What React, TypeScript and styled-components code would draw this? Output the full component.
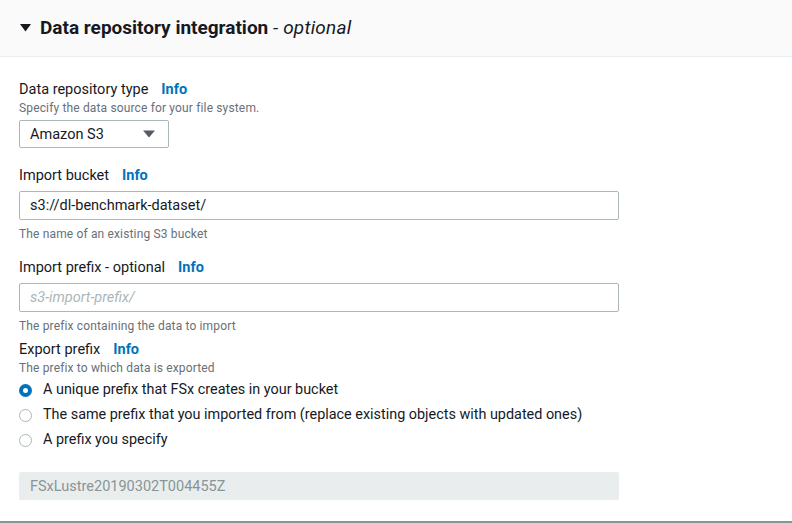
import React from "react";
import styled, { createGlobalStyle } from "styled-components";

const Global = createGlobalStyle`
  html, body { margin: 0; padding: 0; background: #fff; }
  body { font-family: Roboto, "Liberation Sans", sans-serif; color: #16191f; }
  * { box-sizing: border-box; }
`;

const Panel = styled.div`
  width: 792px;
  height: 523px;
  border-bottom: 2px solid #879596;
  overflow: hidden;
  background: #fff;
`;

const Header = styled.div`
  height: 57px;
  background: #fafafa;
  border-bottom: 1px solid #eaeded;
  display: flex;
  align-items: center;
  padding-left: 20px;
  gap: 9px;
  padding-bottom: 1px;
`;

const Title = styled.h2`
  margin: 0;
  font-size: 19px;
  font-weight: 700;
  color: #16191f;
`;

const Optional = styled.span`
  font-weight: 400;
  font-style: italic;
  letter-spacing: 0.2px;
`;

const Body = styled.div`
  padding: 23px 0 0 19px;
  display: flex;
  flex-direction: column;
`;

const Field = styled.div<{ $mt?: number }>`
  display: flex;
  flex-direction: column;
  margin-top: ${(p) => p.$mt ?? 0}px;
`;

const Label = styled.div`
  font-size: 14.5px;
  line-height: 20px;
  color: #16191f;
  display: flex;
  gap: 13px;
`;

const Info = styled.span`
  color: #0073bb;
  font-weight: 700;
`;

const Desc = styled.div`
  font-size: 12px;
  line-height: 16px;
  color: #687078;
  letter-spacing: 0.15px;
`;

const Select = styled.div`
  margin-top: 4px;
  width: 150px;
  height: 28px;
  border: 1px solid #aab7b8;
  border-radius: 2px;
  display: flex;
  align-items: center;
  justify-content: space-between;
  padding: 0 13px 0 10px;
  font-size: 14.5px;
`;

const Input = styled.div<{ $placeholder?: boolean; $disabled?: boolean }>`
  margin-top: ${(p) => (p.$disabled ? 22 : 5)}px;
  width: 600px;
  height: ${(p) => (p.$disabled ? 28 : 29)}px;
  border: 1px solid ${(p) => (p.$disabled ? "#eaeded" : "#aab7b8")};
  background: ${(p) => (p.$disabled ? "#eaeded" : "#fff")};
  border-radius: 2px;
  display: flex;
  align-items: center;
  padding-left: 10px;
  font-size: 14.5px;
  color: ${(p) => (p.$placeholder ? "#aab7b8" : p.$disabled ? "#879596" : "#16191f")};
  font-style: ${(p) => (p.$placeholder ? "italic" : "normal")};
`;

const Help = styled.div`
  margin-top: 6px;
  font-size: 12px;
  line-height: 16px;
  color: #687078;
  letter-spacing: 0.15px;
`;

const Radios = styled.div`
  margin-top: 4px;
  display: flex;
  flex-direction: column;
  gap: 5px;
`;

const RadioRow = styled.div`
  display: flex;
  align-items: center;
  gap: 11px;
  font-size: 14.4px;
  line-height: 20px;
`;

const Circle = styled.span<{ $on?: boolean }>`
  width: 13px;
  height: 13px;
  border-radius: 50%;
  border: ${(p) => (p.$on ? "4px solid #0073bb" : "1px solid #aab7b8")};
  background: #fff;
  flex: none;
`;

const Triangle = () => (
  <svg width="11" height="9" viewBox="0 0 11 9">
    <polygon points="0,1 11,1 5.5,8.5" fill="#16191f" />
  </svg>
);

const Caret = () => (
  <svg width="12" height="8" viewBox="0 0 12 8">
    <polygon points="0,0.5 12,0.5 6,7.5" fill="#545b64" />
  </svg>
);

export default function App() {
  return (
    <>
      <Global />
      <Panel>
        <Header>
          <Triangle />
          <Title>
            Data repository integration <Optional>- optional</Optional>
          </Title>
        </Header>
        <Body>
          <Field>
            <Label>
              Data repository type <Info>Info</Info>
            </Label>
            <Desc>Specify the data source for your file system.</Desc>
            <Select>
              <span>Amazon S3</span>
              <Caret />
            </Select>
          </Field>
          <Field $mt={18}>
            <Label>
              Import bucket <Info>Info</Info>
            </Label>
            <Input>s3://dl-benchmark-dataset/</Input>
            <Help>The name of an existing S3 bucket</Help>
          </Field>
          <Field $mt={16}>
            <Label>
              Import prefix - optional <Info>Info</Info>
            </Label>
            <Input $placeholder>s3-import-prefix/</Input>
            <Help>The prefix containing the data to import</Help>
          </Field>
          <Field $mt={6}>
            <Label>
              Export prefix <Info>Info</Info>
            </Label>
            <Desc>The prefix to which data is exported</Desc>
            <Radios>
              <RadioRow>
                <Circle $on />A unique prefix that FSx creates in your bucket
              </RadioRow>
              <RadioRow>
                <Circle />
                The same prefix that you imported from (replace existing objects with updated ones)
              </RadioRow>
              <RadioRow>
                <Circle />A prefix you specify
              </RadioRow>
            </Radios>
            <Input $disabled>FSxLustre20190302T004455Z</Input>
          </Field>
        </Body>
      </Panel>
    </>
  );
}
